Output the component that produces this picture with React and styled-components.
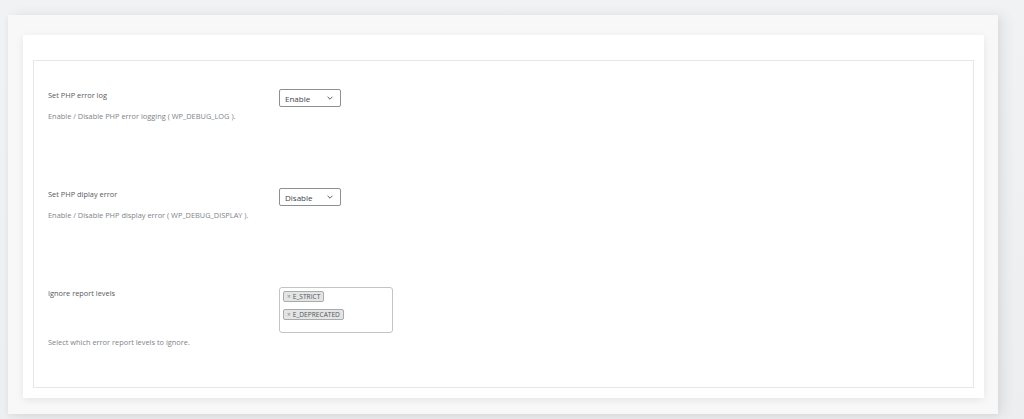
import React from "react";
import styled, { createGlobalStyle } from "styled-components";

const GlobalStyle = createGlobalStyle`
  html, body {
    margin: 0;
    padding: 0;
    background: #eef0f2;
    font-family: "Open Sans", "Noto Sans", sans-serif;
  }
  #root {
    height: 419px;
    overflow: hidden;
  }
`;

const Page = styled.div`
  height: 419px;
  box-sizing: border-box;
  padding: 15px 26px 0 8px;
  background: linear-gradient(#f1f2f4, #eceef0);
`;

const OuterPanel = styled.div`
  background: #f8f8f8;
  box-shadow: 6px 0 12px rgba(0, 0, 0, 0.07), 0 2px 6px rgba(0, 0, 0, 0.05);
  padding: 20px 14px 16px 15px;
  height: 363px;
`;

const Card = styled.div`
  background: #ffffff;
  box-shadow: 0 2px 8px rgba(0, 0, 0, 0.08);
  padding: 25px 10px 10px 10px;
  height: 328px;
`;

const SettingsBox = styled.div`
  border: 1px solid #e6e7e8;
  height: 100%;
  box-sizing: border-box;
  padding-top: 28px;
`;

const Row = styled.div`
  display: grid;
  grid-template-columns: 231px 1fr;
  grid-template-rows: auto auto;
  align-items: start;
  align-content: start;
  height: ${(p) => (p.$last ? "auto" : "99px")};
  padding-left: 14px;
`;

const Label = styled.div`
  grid-column: 1;
  grid-row: 1;
  font-size: 7.4px;
  color: #555a60;
  line-height: 10px;
  margin-top: 1px;
`;

const Field = styled.div`
  grid-column: 2;
  grid-row: 1;
`;

const Description = styled.div`
  grid-column: 1;
  grid-row: 2;
  font-size: 7.4px;
  color: #80848a;
  line-height: 10px;
  margin-top: 4px;
`;

const Select = styled.div`
  display: flex;
  align-items: center;
  justify-content: space-between;
  width: 62px;
  height: 18px;
  box-sizing: border-box;
  border: 1px solid #8c8f94;
  border-radius: 2px;
  padding: 0 6px 0 5px;
  font-size: 8px;
  color: #3c434a;
  background: #fff;
`;

const Chevron = styled.svg`
  width: 8px;
  height: 8px;
`;

const MultiSelect = styled.div`
  width: 114px;
  height: 46px;
  box-sizing: border-box;
  border: 1px solid #c3c4c7;
  border-radius: 3px;
  padding: 3px 3px;
  display: flex;
  flex-direction: column;
  align-items: flex-start;
  gap: 7px;
`;

const Tag = styled.span`
  display: inline-flex;
  align-items: center;
  height: 11px;
  box-sizing: border-box;
  padding: 0 3px;
  background: #e4e4e4;
  border: 1px solid #aaaaaa;
  border-radius: 2px;
  font-size: 6.6px;
  color: #50575e;
  gap: 2px;
`;

const Remove = styled.span`
  color: #888;
  font-size: 6.6px;
`;

function DropDown({ value }) {
  return (
    <Select>
      {value}
      <Chevron viewBox="0 0 10 10">
        <path d="M2 3.5 L5 6.5 L8 3.5" fill="none" stroke="#50575e" strokeWidth="1.2" />
      </Chevron>
    </Select>
  );
}

export default function App() {
  return (
    <>
      <GlobalStyle />
      <Page>
        <OuterPanel>
          <Card>
            <SettingsBox>
              <Row>
                <Label>Set PHP error log</Label>
                <Field>
                  <DropDown value="Enable" />
                </Field>
                <Description>Enable / Disable PHP error logging ( WP_DEBUG_LOG ).</Description>
              </Row>
              <Row>
                <Label>Set PHP diplay error</Label>
                <Field>
                  <DropDown value="Disable" />
                </Field>
                <Description>Enable / Disable PHP display error ( WP_DEBUG_DISPLAY ).</Description>
              </Row>
              <Row $last>
                <Label>Ignore report levels</Label>
                <Field>
                  <MultiSelect>
                    <Tag>
                      <Remove>×</Remove>E_STRICT
                    </Tag>
                    <Tag>
                      <Remove>×</Remove>E_DEPRECATED
                    </Tag>
                  </MultiSelect>
                </Field>
                <Description>Select which error report levels to ignore.</Description>
              </Row>
            </SettingsBox>
          </Card>
        </OuterPanel>
      </Page>
    </>
  );
}
